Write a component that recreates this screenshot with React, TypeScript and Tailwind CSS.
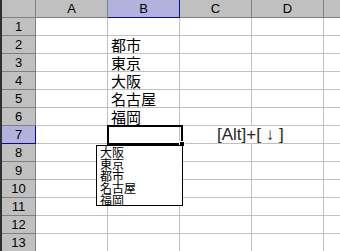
import React from "react";

const cols = ["A", "B", "C", "D", ""];
const rows = Array.from({ length: 13 }, (_, i) => i + 1);

const cellText: Record<number, string> = {
  2: "都市",
  3: "東京",
  4: "大阪",
  5: "名古屋",
  6: "福岡",
};

const listItems = ["大阪", "東京", "都市", "名古屋", "福岡"];

const jp = { fontFamily: '"Noto Sans CJK JP", "Noto Sans", sans-serif' };
const ui = { fontFamily: '"Liberation Sans", Arial, sans-serif' };

export default function App() {
  return (
    <div className="relative w-[340px] h-[251px] overflow-hidden bg-white border-l-2 border-[#303030]" style={ui}>
      {/* header row */}
      <div className="flex h-[18px]">
        <div className="w-[34px] shrink-0 bg-[#c0c0c0] border-r border-b border-[#808080]" />
        {cols.map((c, i) => (
          <div
            key={i}
            className={
              c === "B"
                ? "w-[72px] shrink-0 bg-[#b2b2dc] border-r border-b border-[#0a0a9a] flex items-center justify-center text-[13px] text-black"
                : "w-[72px] shrink-0 bg-[#c0c0c0] border-r border-b border-[#808080] flex items-center justify-center text-[13px] text-black"
            }
          >
            {c}
          </div>
        ))}
      </div>

      {/* rows */}
      {rows.map((r) => (
        <div key={r} className="flex h-[18px]">
          <div
            className={
              r === 7
                ? "w-[34px] shrink-0 bg-[#b2b2dc] border-r border-b border-[#0a0a9a] flex items-center justify-center text-[13px] text-black"
                : "w-[34px] shrink-0 bg-[#c0c0c0] border-r border-b border-[#808080] flex items-center justify-center text-[13px] text-black"
            }
          >
            {r}
          </div>
          <div className="w-[72px] shrink-0 border-r border-b border-[#c0c0c0]" />
          <div className="w-[72px] shrink-0 border-r border-b border-[#c0c0c0] flex items-end pl-[3px] text-[15px] leading-[16px] text-black" style={jp}>
            {cellText[r]}
          </div>
          {r === 7 ? (
            <div className="w-[144px] shrink-0 border-r border-b border-[#c0c0c0] flex items-center pl-[37px] text-[17px] leading-[18px] text-[#262626] whitespace-nowrap">
              [Alt]+[ ↓ ]
            </div>
          ) : (
            <>
              <div className="w-[72px] shrink-0 border-r border-b border-[#c0c0c0]" />
              <div className="w-[72px] shrink-0 border-r border-b border-[#c0c0c0]" />
            </>
          )}
          <div className="w-[72px] shrink-0 border-r border-b border-[#c0c0c0]" />
        </div>
      ))}

      {/* active cell B7 */}
      <div className="absolute left-[105px] top-[125px] w-[76px] h-[20px] border-2 border-black" />
      <div className="absolute left-[177px] top-[141px] w-[6px] h-[6px] bg-black border border-white" />

      {/* dropdown list */}
      <div className="absolute left-[94px] top-[145px] w-[87px] h-[61px] bg-white border border-black pl-[3px] text-[12px] leading-[12px] text-black" style={jp}>
        {listItems.map((t) => (
          <div key={t} className="h-[12px]">{t}</div>
        ))}
      </div>
    </div>
  );
}
